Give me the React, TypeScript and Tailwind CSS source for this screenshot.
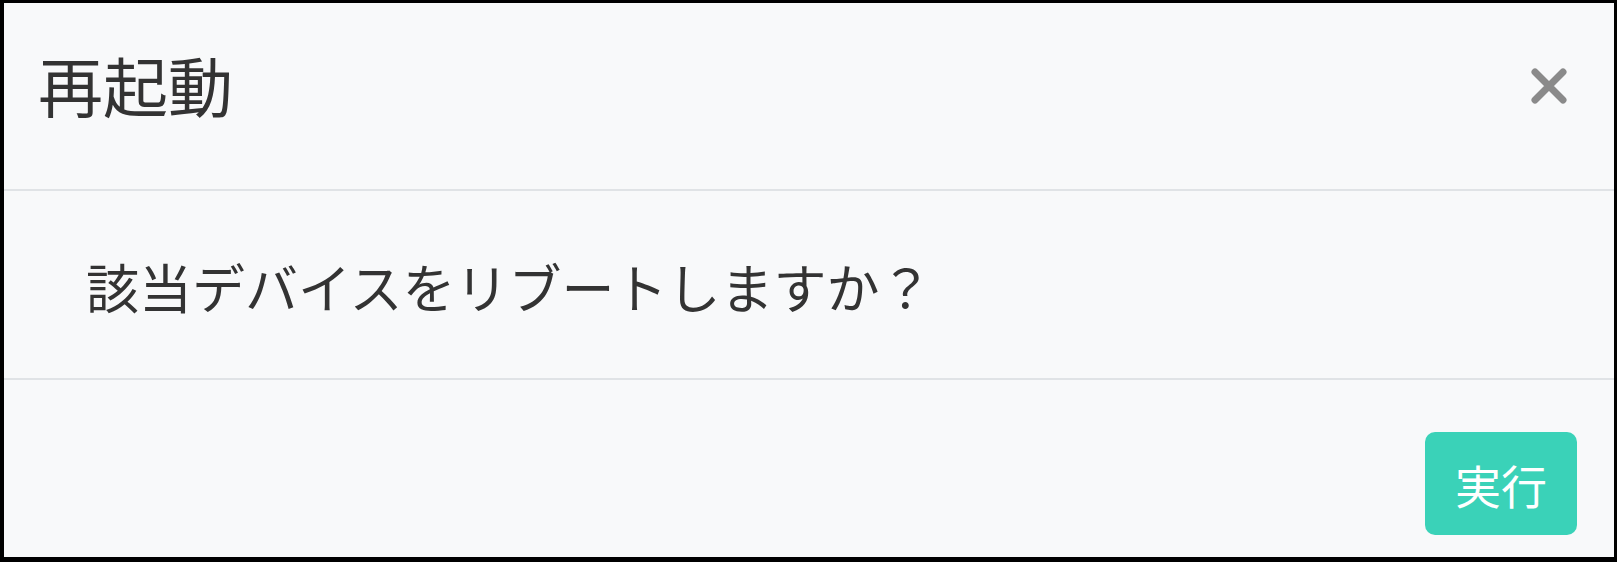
import React from "react";

/** 再起動の確認ダイアログ */
export default function App() {
  const font = { fontFamily: '"Noto Sans CJK JP", "Noto Sans", sans-serif' };
  return (
    <div
      className="flex h-[562px] w-[1617px] flex-col border-4 border-t-[3px] border-r-[3px] border-b-[5px] border-black bg-[#f8f9fa] text-[#333]"
      style={font}
    >
      <header className="flex h-[188px] shrink-0 items-center justify-between border-b-2 border-[#e0e3e6] pl-[34px] pr-[45px]">
        <h1 className="-mt-[24px] text-[65px] leading-none font-normal">再起動</h1>
        <button type="button" className="-mt-[20px] flex h-[40px] w-[40px] items-center justify-center">
          <svg viewBox="0 0 40 40" className="h-[40px] w-[40px]">
            <path d="M6 6 L34 34 M34 6 L6 34" stroke="#8a8a8a" strokeWidth="7" strokeLinecap="round" />
          </svg>
        </button>
      </header>
      <section className="flex h-[189px] shrink-0 items-center border-b-2 border-[#e0e3e6] pl-[82px]">
        <p className="mt-[4px] text-[53px] leading-none">該当デバイスをリブートしますか？</p>
      </section>
      <footer className="flex flex-1 items-start justify-end pt-[52px] pr-[37px]">
        <button
          type="button"
          className="flex h-[103px] w-[152px] items-center justify-center rounded-[10px] bg-[#3ad2b8] text-[46px] leading-none text-white"
        >
          実行
        </button>
      </footer>
    </div>
  );
}
